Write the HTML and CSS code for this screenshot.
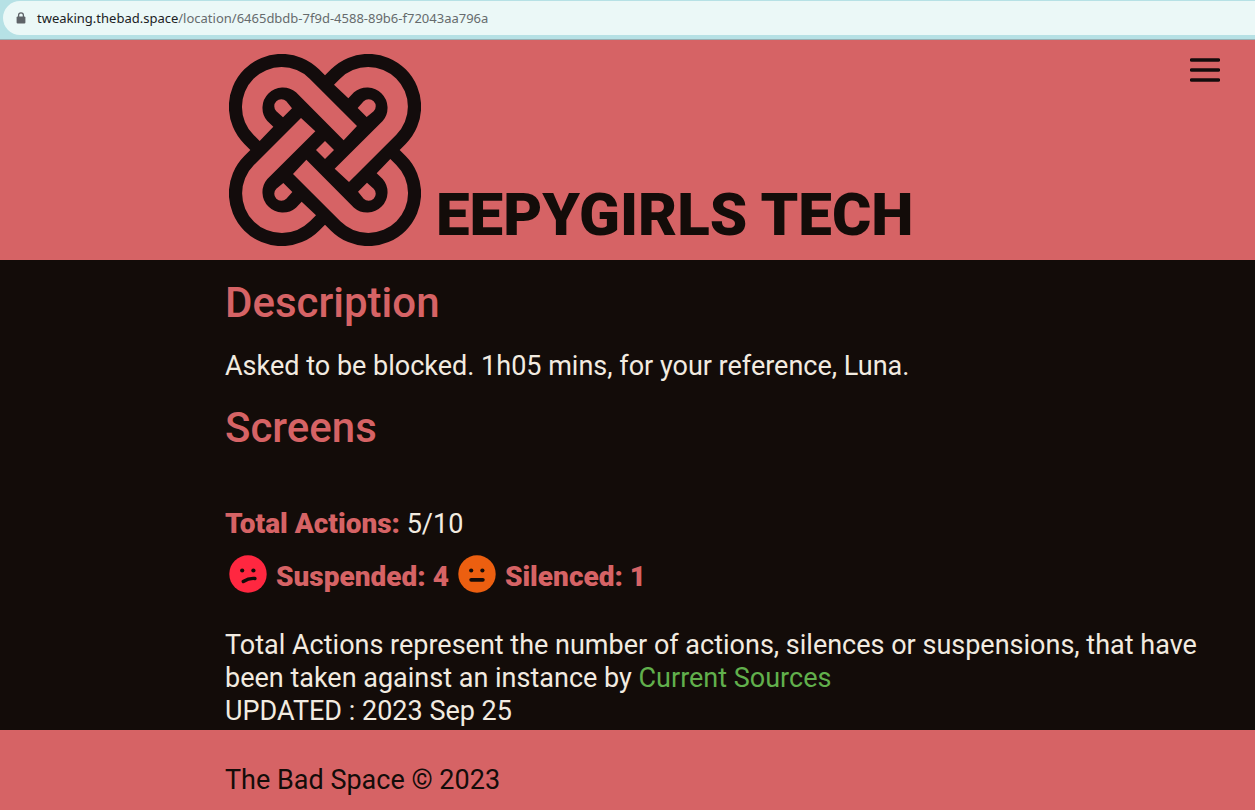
FILE: index.html
```html
<!DOCTYPE html>
<html lang="en">
<head>
<meta charset="utf-8">
<meta name="viewport" content="width=device-width, initial-scale=1">
<title>The Bad Space</title>
<link rel="stylesheet" href="styles.css">
</head>
<body>
<div class="browser-bar">
  <a class="address" href="#">
    <svg class="lock" viewBox="0 0 10 12" aria-hidden="true"><path d="M2.6 5V3.2a2.4 2.4 0 0 1 4.8 0V5" fill="none" stroke="currentColor" stroke-width="1.3"/><rect x="0.6" y="4.5" width="8.8" height="7" rx="1" fill="currentColor"/></svg>
    <span class="url"><span class="host">tweaking.thebad.space</span>/location/6465dbdb-7f9d-4588-89b6-f72043aa796a</span>
  </a>
</div>
<header class="site-header">
  <svg class="logo" viewBox="27 27 576 576" role="img" aria-label="The Bad Space logo">
    <defs>
      <g id="loop">
        <path d="M119 288L101 270A117 117 0 0 1 269 101L411 243L371 286L228 142A61 61 0 0 0 142 228L160 245Z"/>
        <path d="M189 217L169 199A21 21 0 0 1 199 169L216 190Z"/>
      </g>
    </defs>
    <path class="knot" d="M297 73L315 91L333 73A158 158 0 0 1 557 297L539 315L557 333A158 158 0 0 1 333 557L315 539L297 557A158 158 0 0 1 73 333L91 315L73 297A158 158 0 0 1 297 73Z"/>
    <g class="band">
      <use href="#loop"/>
      <use href="#loop" transform="rotate(90 315 315)"/>
      <use href="#loop" transform="rotate(180 315 315)"/>
      <use href="#loop" transform="rotate(270 315 315)"/>
      <path d="M315 288L342 315L315 342L288 315Z"/>
    </g>
  </svg>
  <h1 class="title">EEPYGIRLS TECH</h1>
  <button class="menu" type="button" aria-label="Menu">
    <svg class="menu-icon" viewBox="0 0 30 24" aria-hidden="true"><path d="M1.5 2H28.5M1.5 12H28.5M1.5 22H28.5" stroke="currentColor" stroke-width="3.4" stroke-linecap="round"/></svg>
  </button>
</header>
<main class="content">
  <h2 class="heading">Description</h2>
  <p class="description">Asked to be blocked. 1h05 mins, for your reference, Luna.</p>
  <h2 class="heading">Screens</h2>
  <p class="total"><strong class="label">Total Actions:</strong> 5/10</p>
  <div class="counts">
    <svg class="face" viewBox="0 0 38 38" aria-hidden="true"><circle cx="19" cy="19" r="18.7" fill="#ff2740"/><circle cx="13.2" cy="15.5" r="2.1"/><circle cx="24.4" cy="15.5" r="2.1"/><path d="M14.3 26.5Q20 22.9 25.9 23.5" fill="none" stroke="currentColor" stroke-width="3.4" stroke-linecap="round"/></svg>
    <strong class="label count">Suspended: 4</strong>
    <svg class="face" viewBox="0 0 38 38" aria-hidden="true"><circle cx="19" cy="19" r="18.7" fill="#ec5f10"/><circle cx="13.2" cy="15.5" r="2.1"/><circle cx="24.4" cy="15.5" r="2.1"/><path d="M13.2 24.8H24.8" fill="none" stroke="currentColor" stroke-width="3.8" stroke-linecap="round"/></svg>
    <strong class="label count">Silenced: 1</strong>
  </div>
  <p class="note">Total Actions represent the number of actions, silences or suspensions, that have been taken against an instance by <a class="source" href="#">Current Sources</a><br>UPDATED : 2023 Sep 25</p>
</main>
<footer class="site-footer">The Bad Space © 2023</footer>
</body>
</html>
```
FILE: styles.css
```css
* { box-sizing: border-box; }

body {
  display: flex;
  flex-direction: column;
  min-height: 100vh;
  margin: 0;
  background: #d66365;
  color: #130c09;
  font-family: Roboto, "Liberation Sans", sans-serif;
  font-size: 27px;
  line-height: 33px;
}

h1, h2, p { margin: 0; }

.browser-bar {
  padding: 1px 0 4px 3px;
  background: #b6e1e5;
  border-bottom: 1px solid #99afb3;
}

.address {
  display: flex;
  align-items: center;
  gap: 11px;
  height: 34px;
  padding-left: 13px;
  border-radius: 17px 0 0 17px;
  background: #ebf8f7;
  color: #666b6d;
  font-family: "Noto Sans", "Open Sans", sans-serif;
  font-size: 13px;
  line-height: 18px;
  text-decoration: none;
}

.lock { width: 10px; height: 12px; color: #5f6368; }
.host { color: #202124; }

.site-header {
  display: flex;
  align-items: flex-end;
  padding: 14px 35px 14px 229px;
}

.logo { flex: none; width: 192px; height: 192px; }
.knot { fill: #130c0c; }
.band { fill: #d66365; }

.title {
  margin-left: 15px;
  font-size: 60px;
  font-weight: 900;
  line-height: 62px;
  white-space: nowrap;
}

.menu {
  align-self: flex-start;
  margin-left: auto;
  padding: 4px 0;
  border: 0;
  background: none;
  color: #130c0c;
}

.menu-icon { display: block; width: 30px; height: 24px; }

.content {
  padding: 20px 48px 2px 225px;
  background: #130c09;
  color: #f2ebe0;
}

.heading {
  color: #d66365;
  font-size: 42px;
  font-weight: 500;
  line-height: 46px;
}

.description { padding: 24px 0 22px; }
.total { padding-top: 56px; }
.label { color: #d66365; font-size: 28px; font-weight: 900; }

.counts {
  display: flex;
  align-items: center;
  gap: 9px;
  padding: 13px 0 36px 4px;
}

.count { padding-top: 6px; }
.face { width: 38px; height: 38px; fill: #130c09; color: #130c09; }
.source { color: #61b04c; text-decoration: none; }
.site-footer { padding: 34px 48px 14px 225px; }
```
